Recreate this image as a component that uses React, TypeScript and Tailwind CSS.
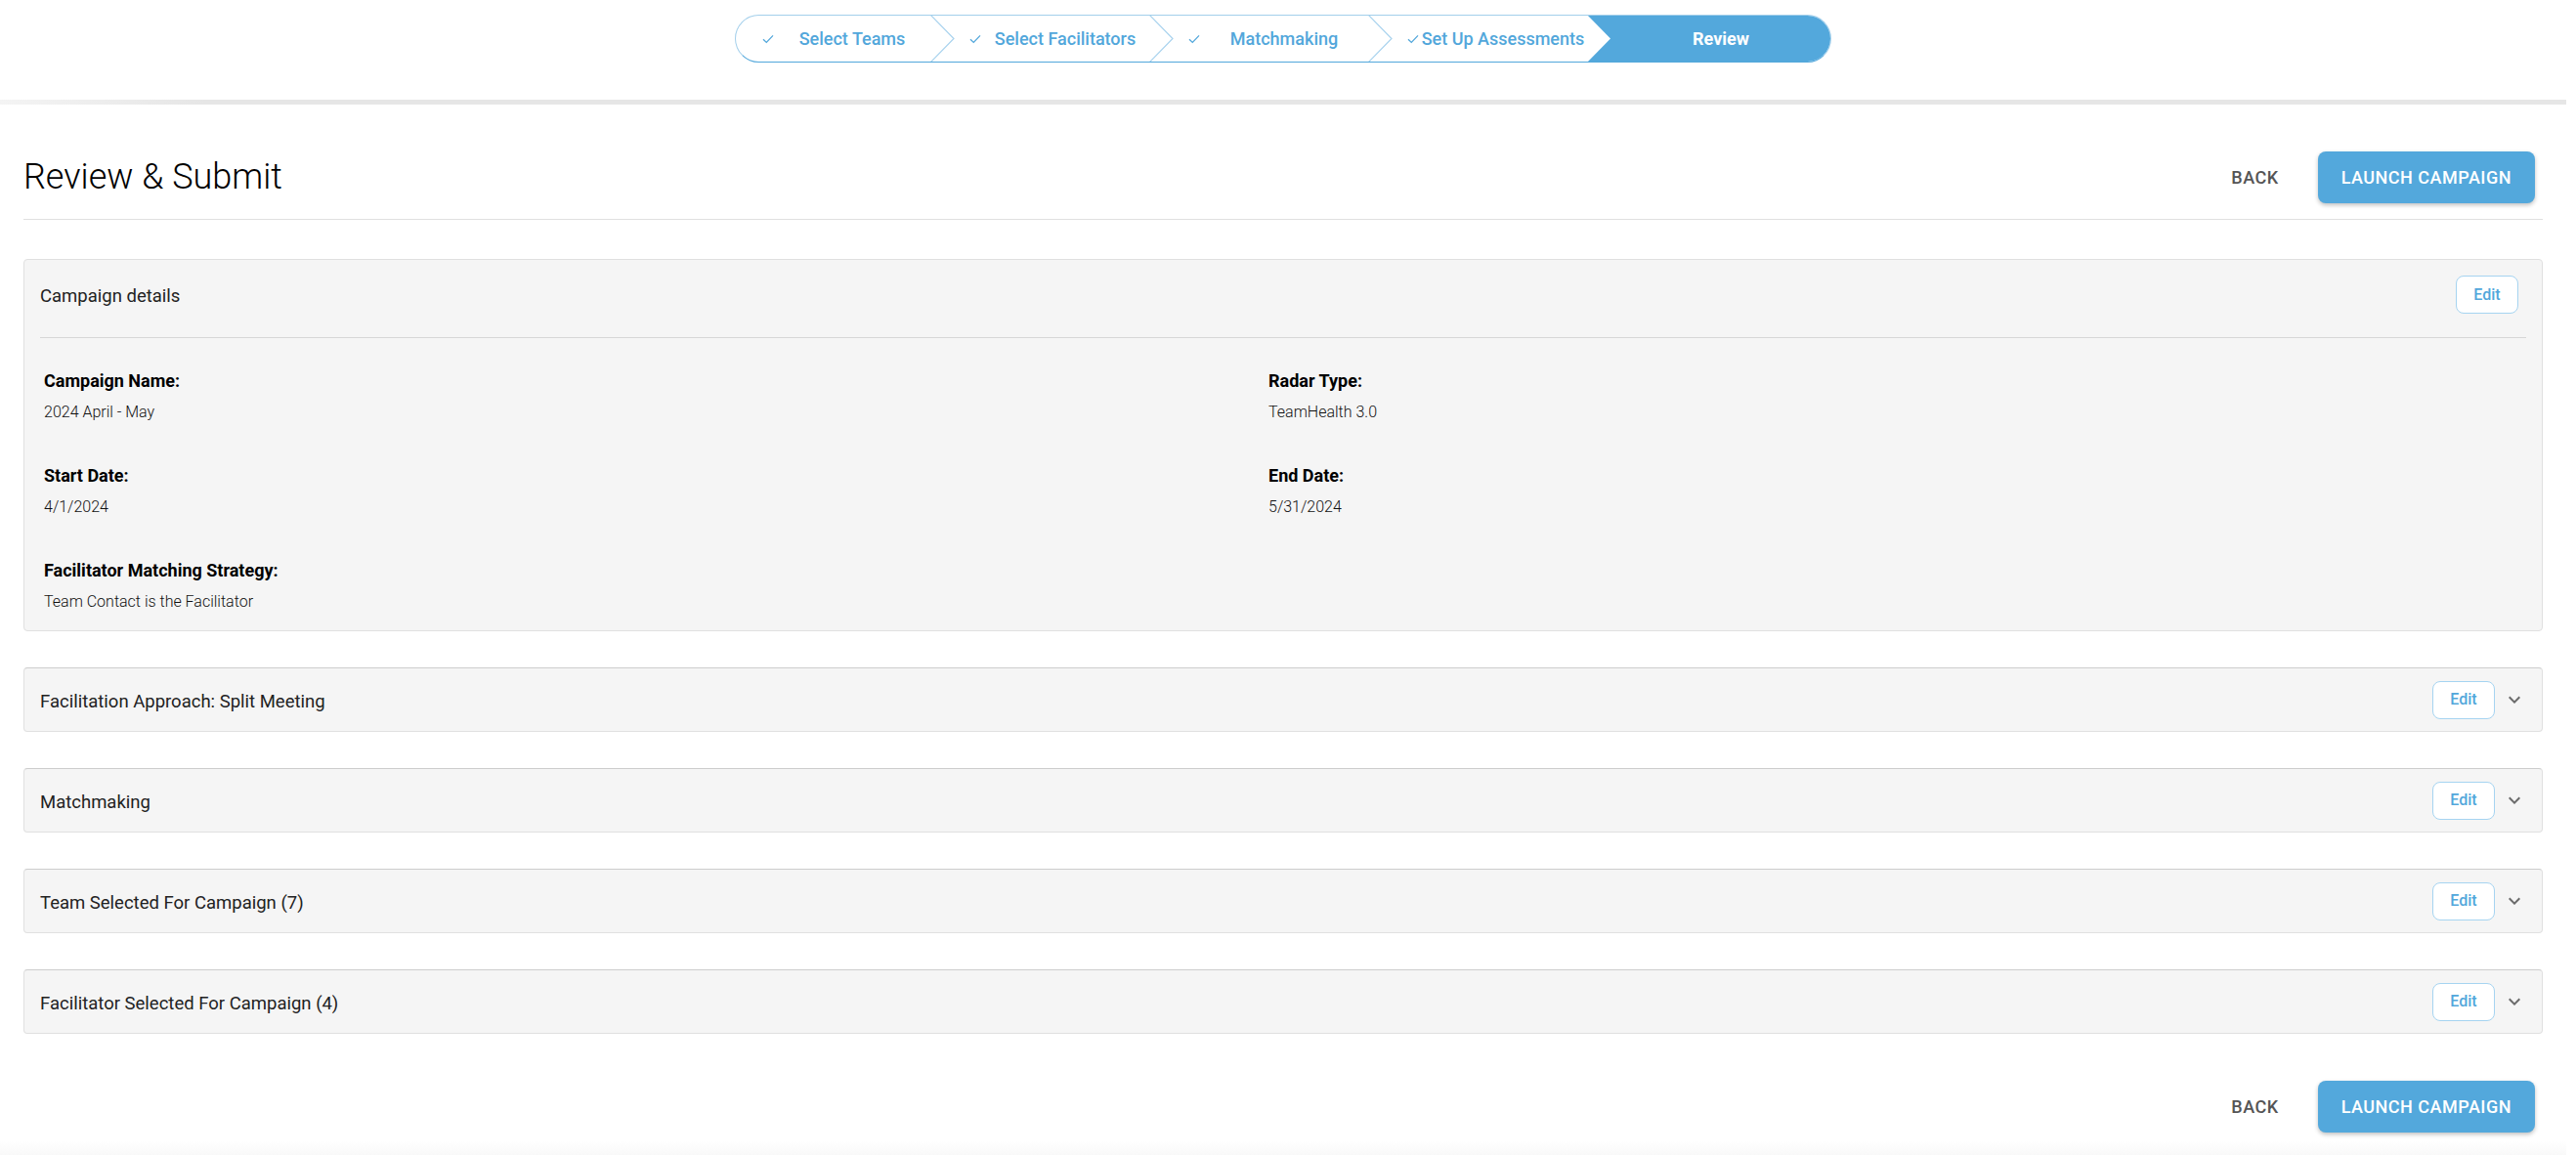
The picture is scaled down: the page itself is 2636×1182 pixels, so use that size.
import React from "react";

const steps = ["Select Teams", "Select Facilitators", "Matchmaking", "Set Up Assessments", "Review"];

function Check() {
    return (
        <svg width="12" height="10" viewBox="0 0 12 10" className="shrink-0">
            <path d="M1 5.2 L4.3 8.4 L11 1.4" fill="none" stroke="#52a7db" strokeWidth="1.3" />
        </svg>
    );
}

function Separator() {
    return (
        <svg width="25" height="49" viewBox="0 0 25 49" className="absolute right-0 top-[-1px]">
            <path d="M0 0 L24 24.5 L0 49" fill="none" stroke="#a9d3ee" strokeWidth="1.2" />
        </svg>
    );
}

function Stepper() {
    return (
        <div className="flex h-[49px] w-[1122px] overflow-hidden rounded-full border border-[#a3cfeb] border-b-[#52a7db] bg-white">
            {steps.map((s, i) => {
                const last = i === steps.length - 1;
                if (last) {
                    return (
                        <div key={s} className="relative flex min-w-0 flex-1 items-center justify-center">
                            <div className="absolute inset-y-[-1px] left-[-25px] right-0 bg-[#53a8dc] [clip-path:polygon(0_0,100%_0,100%_100%,0_100%,24px_50%)]" />
                            <span className="relative text-[18px] font-bold text-white">{s}</span>
                        </div>
                    );
                }
                return (
                    <div key={s} className={`relative flex w-[224px] shrink-0 items-center pr-[25px] ${i === 0 ? "pl-[27px]" : "pl-[15px]"}`}>
                        <Check />
                        <span className="min-w-0 flex-1 whitespace-nowrap text-center text-[18px] font-medium text-[#52a7db]">{s}</span>
                        {i < steps.length - 2 && <Separator />}
                    </div>
                );
            })}
        </div>
    );
}

function EditButton() {
    return (
        <button className="h-[39px] w-[64px] rounded-[8px] border border-[#a6d4f1] bg-white text-[16px] font-medium text-[#52a7db]">
            Edit
        </button>
    );
}

function Chevron() {
    return (
        <svg width="24" height="24" viewBox="0 0 24 24" className="ml-[8px]">
            <path d="M16.59 8.59 12 13.17 7.41 8.59 6 10l6 6 6-6z" fill="#6b6b6b" />
        </svg>
    );
}

function Actions() {
    return (
        <div className="flex items-center gap-[24px] pr-[8px]">
            <button className="px-[16px] text-[18px] font-medium uppercase tracking-[0.5px] text-[#555]">Back</button>
            <button className="h-[53px] rounded-[8px] bg-[#53a8dc] px-[24px] text-[18px] font-medium uppercase tracking-[0.5px] text-white shadow-[0_2px_4px_rgba(0,0,0,0.25)]">
                Launch Campaign
            </button>
        </div>
    );
}

function Field({ label, value }: { label: string; value: string }) {
    return (
        <div>
            <p className="text-[18px] font-bold leading-[20px] text-black">{label}</p>
            <p className="mt-[12px] text-[16px] font-light leading-[20px] text-[#111]">{value}</p>
        </div>
    );
}

function Section({ title }: { title: string }) {
    return (
        <div className="flex h-[66px] items-center rounded-[4px] border border-[#e0e0e0] border-t-[#cdcdcd] bg-[#f5f5f5] pl-[16px] pr-[16px]">
            <span className="flex-1 pt-[5px] text-[18.5px] text-[#222]">{title}</span>
            <EditButton />
            <Chevron />
        </div>
    );
}

export default function App() {
    return (
        <div className="min-h-[1182px] w-[2626px] bg-white font-['Roboto',sans-serif]">
            <header className="flex h-[102px] justify-center pt-[15px]">
                <Stepper />
            </header>
            <div className="h-[5px] bg-[linear-gradient(to_right,#f4f4f4_0%,#e6e6e6_8%,#e6e6e6_100%)]" />

            <main className="px-[24px] pt-[48px]">
                <div className="flex items-center justify-between border-b border-[#e0e0e0] pb-[16px]">
                    <h1 className="text-[36px] font-light leading-[53px] text-black">Review &amp; Submit</h1>
                    <Actions />
                </div>

                <div className="mt-[40px] flex flex-col gap-[37px]">
                    <div className="rounded-[4px] border border-[#e0e0e0] bg-[#f5f5f5] px-[16px] pb-[19px]">
                        <div className="flex items-center border-b border-[#d6d6d6] pb-[24px] pt-[16px]">
                            <span className="flex-1 pt-[5px] text-[18.5px] text-[#222]">Campaign details</span>
                            <div className="mr-[8px]">
                                <EditButton />
                            </div>
                        </div>
                        <div className="grid grid-cols-[1253px_1fr] gap-y-[45px] pl-[4px] pt-[34px]">
                            <Field label="Campaign Name:" value="2024 April - May" />
                            <Field label="Radar Type:" value="TeamHealth 3.0" />
                            <Field label="Start Date:" value="4/1/2024" />
                            <Field label="End Date:" value="5/31/2024" />
                            <Field label="Facilitator Matching Strategy:" value="Team Contact is the Facilitator" />
                        </div>
                    </div>

                    <Section title="Facilitation Approach: Split Meeting" />
                    <Section title="Matchmaking" />
                    <Section title="Team Selected For Campaign (7)" />
                    <Section title="Facilitator Selected For Campaign (4)" />
                </div>

                <div className="mt-[48px] flex justify-end">
                    <Actions />
                </div>
            </main>
            <div className="mt-[9px] h-[15px] bg-[linear-gradient(to_bottom,#ffffff,#f8f8f8)]" />
        </div>
    );
}
